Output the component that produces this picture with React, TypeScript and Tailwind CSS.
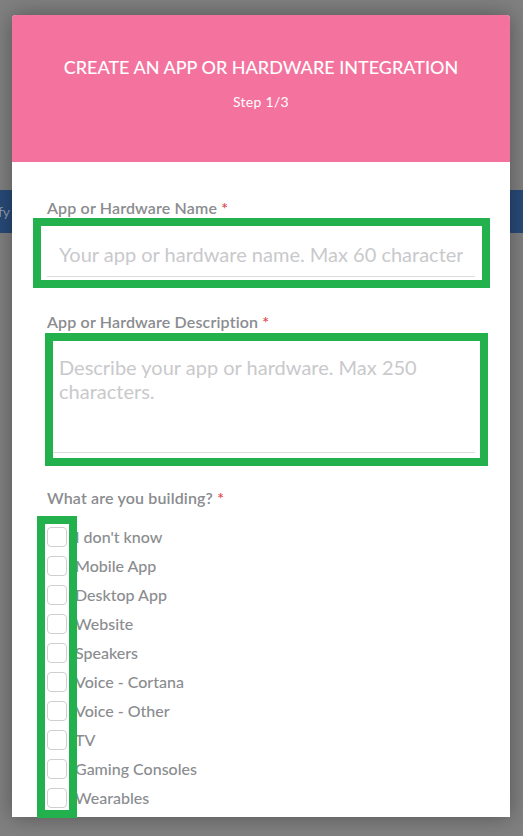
import React from "react";

const options = [
  "I don't know",
  "Mobile App",
  "Desktop App",
  "Website",
  "Speakers",
  "Voice - Cortana",
  "Voice - Other",
  "TV",
  "Gaming Consoles",
  "Wearables",
];

function Label({ children }: { children: React.ReactNode }) {
  return (
    <div className="text-[16px] leading-[20px] font-semibold tracking-[0.15px] text-[#8a8c8f]">
      {children} <span className="text-[#e5484d]">*</span>
    </div>
  );
}

export default function App() {
  return (
    <div
      className="relative w-[523px] h-[836px] overflow-hidden bg-[#808080] pt-[15px] pl-[12px]"
      style={{ fontFamily: "Lato, 'Open Sans', sans-serif" }}
    >
      {/* background page navbar (dimmed) */}
      <div className="absolute left-0 right-0 top-[190px] h-[43px] bg-[#284a78] flex items-center">
        <span className="ml-[-39px] text-[14px] text-[#8d9bb0]">Simplify</span>
      </div>

      {/* modal */}
      <div className="relative z-10 w-[498px] h-[802px] bg-white rounded-t-[4px] shadow-[0_0_22px_rgba(0,0,0,0.35)]">
        <div className="h-[147px] bg-[#f4739e] rounded-t-[4px] flex flex-col items-center pt-[40px] text-white">
          <div className="text-[18px] leading-[24px] font-medium">
            CREATE AN APP OR HARDWARE INTEGRATION
          </div>
          <div className="mt-[13px] text-[14px] leading-[20px] tracking-[0.3px]">Step 1/3</div>
        </div>

        <div className="px-[35px] pt-[36px]">
          <Label>App or Hardware Name</Label>
          <div className="relative mt-[9px]">
            <input
              className="block w-full h-[50px] px-[12px] pt-[4px] border-b border-[#dcdcdc] text-[20px] text-[#555] placeholder:text-[#c9c9cc] outline-none bg-white"
              placeholder="Your app or hardware name. Max 60 characters"
            />
            <div className="absolute left-[-14px] right-[-15px] top-[-9px] bottom-[-11px] border-8 border-[#22b14c] pointer-events-none" />
          </div>

          <div className="mt-[35px]">
            <Label>App or Hardware Description</Label>
          </div>
          <div className="relative mt-[10px]">
            <textarea
              className="block w-full h-[111px] px-[12px] pt-[13px] border-b border-[#dcdcdc] text-[20px] leading-[24px] text-[#555] placeholder:text-[#c9c9cc] outline-none resize-none bg-white"
              placeholder="Describe your app or hardware. Max 250 characters."
            />
            <div className="absolute left-[-2px] right-[-13px] top-[-9px] bottom-[-13px] border-8 border-[#22b14c] pointer-events-none" />
          </div>

          <div className="mt-[35px]">
            <Label>What are you building?</Label>
          </div>
          <div className="relative mt-[19px] flex flex-col gap-[9px]">
            {options.map((o) => (
              <label key={o} className="flex items-center gap-[8px] h-[20px]">
                <span className="w-[20px] h-[20px] rounded-[4px] border border-[#cfcfcf] bg-white shrink-0" />
                <span className="text-[16px] leading-[20px] font-medium text-[#8a8c8f]">{o}</span>
              </label>
            ))}
            <div className="absolute left-[-10px] top-[-11px] w-[40px] h-[302px] border-8 border-[#22b14c] pointer-events-none" />
          </div>
        </div>
      </div>
    </div>
  );
}
